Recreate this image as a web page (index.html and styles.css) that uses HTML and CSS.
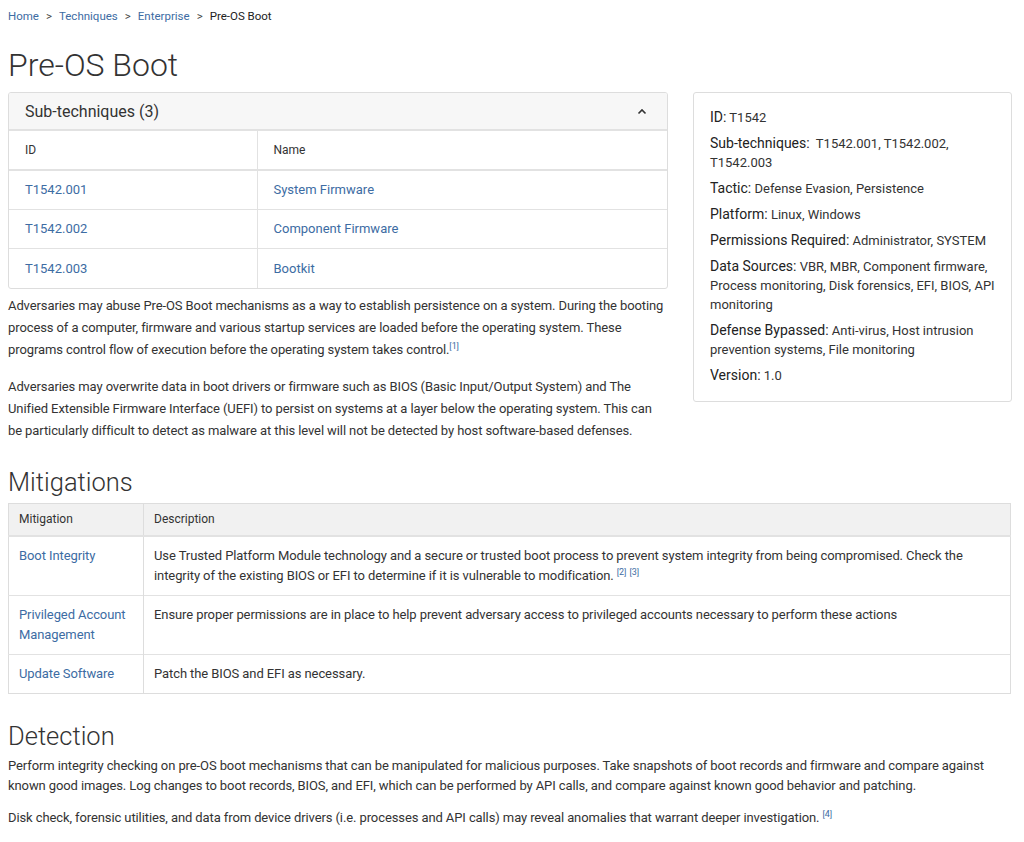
FILE: index.html
```html
<!DOCTYPE html>
<html lang="en">
<head>
<meta charset="utf-8">
<title>Pre-OS Boot</title>
<link rel="stylesheet" href="styles.css">
</head>
<body>
<div class="page">
  <nav class="crumbs">
    <a href="#">Home</a><span class="sep">&gt;</span><a href="#">Techniques</a><span class="sep">&gt;</span><a href="#">Enterprise</a><span class="sep">&gt;</span><span class="cur">Pre-OS Boot</span>
  </nav>
  <h1 class="title">Pre-OS Boot</h1>

  <div class="top">
    <div class="main">
      <div class="subcard">
        <div class="subhead">
          <span>Sub-techniques (3)</span>
          <svg class="chev" width="10" height="7" viewBox="0 0 10 7"><polyline points="1.5,5.5 5,2 8.5,5.5" fill="none" stroke="#333" stroke-width="1.6"/></svg>
        </div>
        <table class="subtable">
          <thead><tr><th class="c1">ID</th><th>Name</th></tr></thead>
          <tbody>
            <tr><td class="c1"><a href="#">T1542.001</a></td><td><a href="#">System Firmware</a></td></tr>
            <tr><td class="c1"><a href="#">T1542.002</a></td><td><a href="#">Component Firmware</a></td></tr>
            <tr><td class="c1"><a href="#">T1542.003</a></td><td><a href="#">Bootkit</a></td></tr>
          </tbody>
        </table>
      </div>
      <div class="desc">
        <p>Adversaries may abuse Pre-OS Boot mechanisms as a way to establish persistence on a system. During the booting process of a computer, firmware and various startup services are loaded before the operating system. These programs control flow of execution before the operating system takes control.<sup><a href="#">[1]</a></sup></p>
        <p>Adversaries may overwrite data in boot drivers or firmware such as BIOS (Basic Input/Output System) and The Unified Extensible Firmware Interface (UEFI) to persist on systems at a layer below the operating system. This can be particularly difficult to detect as malware at this level will not be detected by host software-based defenses.</p>
      </div>
    </div>
    <aside class="info">
      <div class="row"><span class="lab">ID:</span> T1542</div>
      <div class="row"><span class="lab">Sub-techniques:</span>&nbsp; T1542.001, T1542.002, T1542.003</div>
      <div class="row"><span class="lab">Tactic:</span> Defense Evasion, Persistence</div>
      <div class="row"><span class="lab">Platform:</span> Linux, Windows</div>
      <div class="row"><span class="lab">Permissions Required:</span> Administrator, SYSTEM</div>
      <div class="row"><span class="lab">Data Sources:</span> VBR, MBR, Component firmware, Process monitoring, Disk forensics, EFI, BIOS, API monitoring</div>
      <div class="row"><span class="lab">Defense Bypassed:</span> Anti-virus, Host intrusion prevention systems, File monitoring</div>
      <div class="row"><span class="lab">Version:</span> 1.0</div>
    </aside>
  </div>

  <h2 class="sec mit-h">Mitigations</h2>
  <table class="mtable">
    <thead><tr><th class="m1">Mitigation</th><th>Description</th></tr></thead>
    <tbody>
      <tr><td class="m1"><a href="#">Boot Integrity</a></td><td>Use Trusted Platform Module technology and a secure or trusted boot process to prevent system integrity from being compromised. Check the integrity of the existing BIOS or EFI to determine if it is vulnerable to modification. <sup><a href="#">[2]</a></sup> <sup><a href="#">[3]</a></sup></td></tr>
      <tr><td class="m1"><a href="#">Privileged Account Management</a></td><td>Ensure proper permissions are in place to help prevent adversary access to privileged accounts necessary to perform these actions</td></tr>
      <tr><td class="m1"><a href="#">Update Software</a></td><td>Patch the BIOS and EFI as necessary.</td></tr>
    </tbody>
  </table>

  <h2 class="sec det-h">Detection</h2>
  <div class="det">
    <p>Perform integrity checking on pre-OS boot mechanisms that can be manipulated for malicious purposes. Take snapshots of boot records and firmware and compare against known good images. Log changes to boot records, BIOS, and EFI, which can be performed by API calls, and compare against known good behavior and patching.</p>
    <p>Disk check, forensic utilities, and data from device drivers (i.e. processes and API calls) may reveal anomalies that warrant deeper investigation. <sup><a href="#">[4]</a></sup></p>
  </div>
</div>
</body>
</html>
```

FILE: styles.css
```css
* { box-sizing: border-box; }
html, body { margin: 0; padding: 0; background: #fff; }
body {
  font-family: Roboto, "Liberation Sans", sans-serif;
  color: #333;
  font-size: 13px;
}
a { color: #3d6ca3; text-decoration: none; }
.page { padding: 8px 12px 0 8px; width: 1024px; }

.crumbs { font-size: 11.5px; line-height: 16px; height: 16px; }
.crumbs .sep { margin: 0 7px; color: #444; }
.crumbs .cur { color: #222; }

.title {
  font-size: 32px; font-weight: 300; line-height: 38px;
  margin: 22px 0 8px 0; color: #333;
}

.top { display: flex; gap: 25px; align-items: flex-start; }
.main { width: 660px; }
.info {
  width: 319px; border: 1px solid #ddd; border-radius: 3px;
  padding: 15px 16px 9px 16px; color: #333; font-size: 13px;
}
.info .row { line-height: 19px; margin-bottom: 7px; }
.info .lab { font-size: 14px; color: #222; }

.subcard { border: 1px solid #ddd; border-radius: 3px; overflow: hidden; }
.subhead {
  height: 38px; background: #f7f7f7; border-bottom: 2px solid #e2e2e2;
  display: flex; align-items: center; justify-content: space-between;
  padding: 0 20px 0 16px; font-size: 16px; color: #333;
}
.chev { display: block; }
.subtable { width: 100%; border-collapse: collapse; font-size: 13px; }
.subtable th {
  font-weight: 400; font-size: 12px; text-align: left; height: 39px;
  padding: 0 16px; border-bottom: 2px solid #e2e2e2; color: #333;
}
.subtable td { height: 39px; padding: 0 16px; border-top: 1px solid #e2e2e2; }
.subtable tbody tr:last-child td { height: 40px; }
.subtable tbody tr:first-child td { border-top: none; }
.subtable .c1 { width: 248px; border-right: 1px solid #e2e2e2; }

.desc p { margin: 6px 0 15px 0; line-height: 22px; font-size: 13px; letter-spacing: -0.1px; }
.desc p + p { margin-top: 0; }
sup { font-size: 9px; line-height: 0; vertical-align: 5px; }

.sec { font-size: 25.5px; font-weight: 300; line-height: 30px; margin: 0; color: #333; }
.mit-h { margin-top: 10px; margin-bottom: 6px; }

.mtable { width: 1003px; border-collapse: collapse; border: 1px solid #ddd; }
.mtable th {
  background: #f1f1f1; font-weight: 400; font-size: 12px; text-align: left;
  height: 32px; padding: 0 9px 0 10px; border-bottom: 2px solid #e2e2e2;
  border-right: 1px solid #ddd; color: #333;
}
.mtable td {
  padding: 9px 10px 9px 10px; line-height: 20px; vertical-align: top;
  border-top: 1px solid #e2e2e2; border-right: 1px solid #ddd; font-size: 13px;
  letter-spacing: -0.09px;
}
.mtable tbody tr:first-child td { border-top: none; }
.mtable .m1 { width: 135px; }

.det-h { margin-top: 27px; margin-bottom: 5px; }
.det p { margin: 0 0 12px 0; line-height: 20px; font-size: 13px; letter-spacing: -0.1px; }
```
